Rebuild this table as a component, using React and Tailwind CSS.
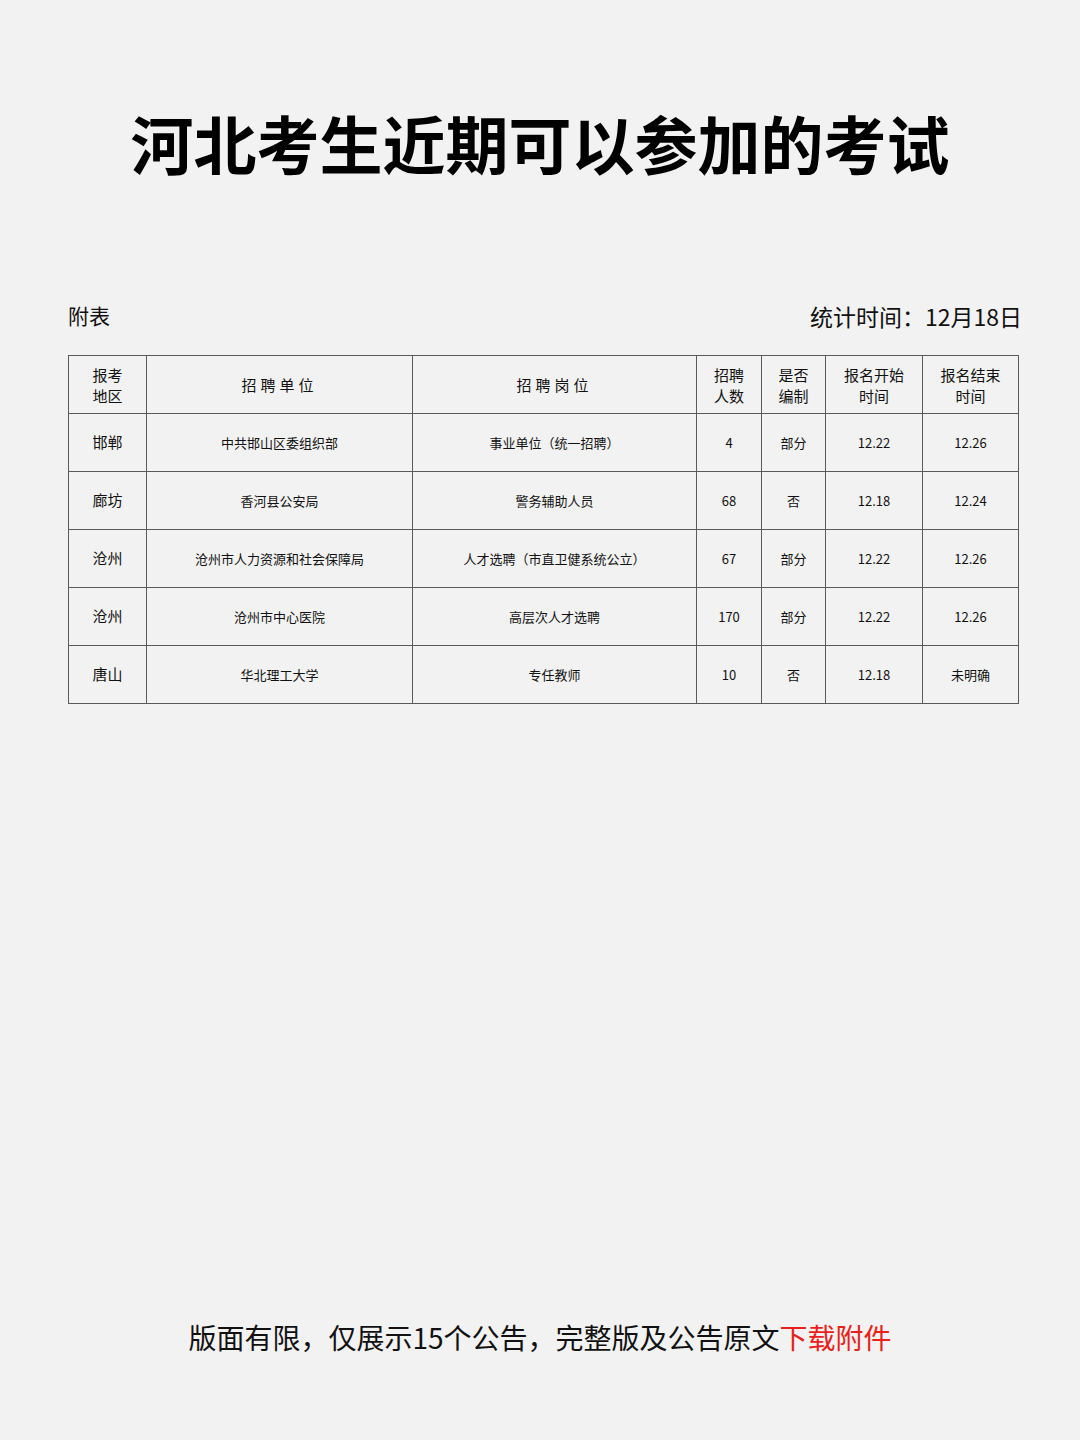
const rows = [
  { area: "邯郸", unit: "中共邯山区委组织部", post: "事业单位（统一招聘）", num: "4", bz: "部分", start: "12.22", end: "12.26" },
  { area: "廊坊", unit: "香河县公安局", post: "警务辅助人员", num: "68", bz: "否", start: "12.18", end: "12.24" },
  { area: "沧州", unit: "沧州市人力资源和社会保障局", post: "人才选聘（市直卫健系统公立）", num: "67", bz: "部分", start: "12.22", end: "12.26" },
  { area: "沧州", unit: "沧州市中心医院", post: "高层次人才选聘", num: "170", bz: "部分", start: "12.22", end: "12.26" },
  { area: "唐山", unit: "华北理工大学", post: "专任教师", num: "10", bz: "否", start: "12.18", end: "未明确" },
];

const font = { fontFamily: '"Noto Sans CJK SC", "Noto Sans", sans-serif' };

export default function App() {
  const cell = "border border-[#5a5a5a] text-center align-middle p-0";
  return (
    <div className="w-[1080px] h-[1440px] bg-[#f2f2f2] text-[#111] flex flex-col" style={font}>
      <h1 className="pt-[102px] h-[187px] text-center text-[63px] leading-[80px] font-bold text-black">
        河北考生近期可以参加的考试
      </h1>
      <div className="mt-[109px] px-[68px] pr-[58px] flex justify-between items-end h-[40px]">
        <span className="text-[21px] leading-[30px] mb-[6px]">附表</span>
        <span className="text-[23px] leading-[32px] mb-[4px]">统计时间：12月18日</span>
      </div>
      <div className="mt-[19px] px-[68px]">
        <table className="w-[951px] border-collapse table-fixed">
          <colgroup>
            <col className="w-[78px]" />
            <col className="w-[266px]" />
            <col className="w-[284px]" />
            <col className="w-[65px]" />
            <col className="w-[64px]" />
            <col className="w-[97px]" />
            <col className="w-[96px]" />
          </colgroup>
          <thead>
            <tr className="h-[58px] text-[15px] leading-[21px] font-normal">
              <th className={cell + " font-normal"}>报考<br />地区</th>
              <th className={cell + " font-normal tracking-[4px]"}>招聘单位</th>
              <th className={cell + " font-normal tracking-[4px]"}>招聘岗位</th>
              <th className={cell + " font-normal"}>招聘<br />人数</th>
              <th className={cell + " font-normal"}>是否<br />编制</th>
              <th className={cell + " font-normal"}>报名开始<br />时间</th>
              <th className={cell + " font-normal"}>报名结束<br />时间</th>
            </tr>
          </thead>
          <tbody>
            {rows.map((r, i) => (
              <tr key={i} className="h-[58px] text-[13px]">
                <td className={cell + " text-[15px]"}>{r.area}</td>
                <td className={cell}>{r.unit}</td>
                <td className={cell}>{r.post}</td>
                <td className={cell}>{r.num}</td>
                <td className={cell}>{r.bz}</td>
                <td className={cell}>{r.start}</td>
                <td className={cell}>{r.end}</td>
              </tr>
            ))}
          </tbody>
        </table>
      </div>
      <p className="mt-auto mb-[83px] text-center text-[28px] leading-[40px]">
        版面有限，仅展示15个公告，完整版及公告原文<span className="text-[#e8221b]">下载附件</span>
      </p>
    </div>
  );
}
